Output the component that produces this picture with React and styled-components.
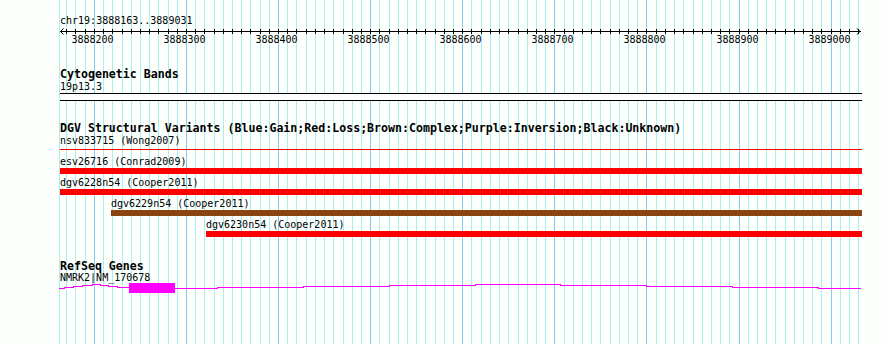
import React from 'react';
import styled, { createGlobalStyle } from 'styled-components';

const START = 3888163;
const END = 3889031;
const X0 = 60.3;
const SCALE = 0.921;
const TRACK_LEFT = 60;
const TRACK_RIGHT = 862;
const col = (bp) => Math.floor(X0 + (bp - START) * SCALE);

const Global = createGlobalStyle`
  html, body { margin: 0; padding: 0; background: #fcfffc; }
  body { width: 890px; height: 344px; overflow: hidden; }
`;

const Canvas = styled.div`
  position: relative;
  width: 890px;
  height: 344px;
  overflow: hidden;
  background: #fcfffc;
  color: #000;
  font-family: "DejaVu Sans Mono", "Liberation Mono", monospace;
`;

const GridLayer = styled.svg`
  position: absolute;
  left: 0;
  top: 0;
  width: 890px;
  height: 344px;
  shape-rendering: crispEdges;
`;

const Tracks = styled.div`
  position: relative;
  display: flex;
  flex-direction: column;
  width: ${TRACK_RIGHT - TRACK_LEFT}px;
  padding: 16px 0 0 ${TRACK_LEFT}px;
`;

const Label = styled.div`
  height: 10px;
  font-size: 10px;
  line-height: 10px;
  white-space: nowrap;
  margin-top: ${(p) => p.$gap || 0}px;
  margin-left: ${(p) => p.$indent || 0}px;
`;

const Title = styled.div`
  height: 11px;
  font-size: 11.6px;
  font-weight: bold;
  line-height: 11px;
  white-space: nowrap;
  margin-top: ${(p) => p.$gap || 0}px;
`;

const Axis = styled.svg`
  display: block;
  width: ${TRACK_RIGHT - TRACK_LEFT}px;
  height: 9px;
  overflow: visible;
  shape-rendering: crispEdges;
`;

const AxisLabels = styled.div`
  position: relative;
  height: 10px;
`;

const AxisNumber = styled.span`
  position: absolute;
  top: 0;
  font-size: 10px;
  line-height: 10px;
  white-space: nowrap;
`;

const Band = styled.div`
  box-sizing: border-box;
  height: 8px;
  margin-top: 1px;
  background: #ffffff;
  border-top: 1px solid #000;
  border-bottom: 1px solid #000;
`;

const VariantRow = styled.div`
  display: flex;
  flex-direction: column;
  height: 21px;
  margin-top: ${(p) => p.$gap || 0}px;
`;

const BarSlot = styled.div`
  display: flex;
  align-items: center;
  height: 6px;
  margin-top: 1px;
`;

const Bar = styled.div`
  height: ${(p) => (p.$thin ? 1 : 6)}px;
  margin-top: ${(p) => (p.$thin ? -1 : 0)}px;
  background: ${(p) => p.$color};
  flex: none;
`;

const GeneGlyph = styled.svg`
  display: block;
  width: ${TRACK_RIGHT - TRACK_LEFT}px;
  height: 11px;
  overflow: visible;
  shape-rendering: crispEdges;
`;

const variants = [
  { name: 'nsv833715 (Wong2007)', start: 3888000, color: '#ff0000', thin: true },
  { name: 'esv26716 (Conrad2009)', start: 3888000, color: '#ff0000' },
  { name: 'dgv6228n54 (Cooper2011)', start: 3888000, color: '#ff0000' },
  { name: 'dgv6229n54 (Cooper2011)', start: 3888219, color: '#8b4513' },
  { name: 'dgv6230n54 (Cooper2011)', start: 3888322, color: '#ff0000' },
];

const gridPositions = [];
for (let bp = 3888170; bp <= 3889030; bp += 10) gridPositions.push(bp);
const majors = [];
for (let bp = 3888200; bp <= 3889000; bp += 100) majors.push(bp);

// gene intron line as steps: [x0, x1, row]
const geneSteps = [
  [59, 64, 288], [64, 73, 287], [73, 82, 286], [82, 92, 285], [92, 100, 284],
  [100, 108, 285], [108, 117, 286], [117, 129, 287],
  [175, 217, 288], [217, 303, 287], [303, 389, 286], [389, 475, 285],
  [475, 560, 284], [560, 646, 285], [646, 732, 286], [732, 818, 287], [818, 861, 288],
];

function Grid() {
  return (
    <GridLayer viewBox="0 0 890 344">
      <line x1={59.5} y1={0} x2={59.5} y2={344} stroke="#aaeeee" strokeWidth={1} />
      {gridPositions.map((bp) => (
        <line
          key={bp}
          x1={col(bp) + 0.5}
          y1={0}
          x2={col(bp) + 0.5}
          y2={344}
          stroke={bp % 100 === 0 ? '#88ccee' : '#aaeeee'}
          strokeWidth={1}
        />
      ))}
    </GridLayer>
  );
}

function Ruler() {
  const rel = (x) => x - TRACK_LEFT;
  return (
    <>
      <Label>chr19:{START}..{END}</Label>
      <Axis viewBox={`0 0 ${TRACK_RIGHT - TRACK_LEFT} 9`}>
        <line x1={0} y1={5.5} x2={800.5} y2={5.5} stroke="#000" strokeWidth={1} />
        <polyline points="3.5,2.5 0.5,5.5 3.5,8.5" fill="none" stroke="#000" strokeWidth={1} shapeRendering="auto" />
        <polyline points="797,2.5 800,5.5 797,8.5" fill="none" stroke="#000" strokeWidth={1} shapeRendering="auto" />
        {gridPositions.map((bp) => (
          <line key={bp} x1={rel(col(bp)) + 0.5} y1={3} x2={rel(col(bp)) + 0.5} y2={8} stroke="#000" strokeWidth={1} />
        ))}
      </Axis>
      <AxisLabels>
        {majors.map((bp) => (
          <AxisNumber key={bp} style={{ left: col(bp) - TRACK_LEFT - 22.5 }}>
            {bp}
          </AxisNumber>
        ))}
      </AxisLabels>
    </>
  );
}

function Variant({ v, gap }) {
  const x = Math.max(TRACK_LEFT, col(v.start));
  const indent = x - TRACK_LEFT;
  return (
    <VariantRow $gap={gap}>
      <Label $indent={indent}>{v.name}</Label>
      <BarSlot>
        <Bar $color={v.color} $thin={v.thin} style={{ marginLeft: indent, width: TRACK_RIGHT - x }} />
      </BarSlot>
    </VariantRow>
  );
}

function Gene() {
  let d = '';
  geneSteps.forEach(([a, b, row], i) => {
    const y = row - 283 + 0.5;
    const x0 = a - TRACK_LEFT;
    const x1 = b - TRACK_LEFT;
    const prev = geneSteps[i - 1];
    if (!prev || prev[1] !== a) d += `M${x0} ${y} `;
    else d += `V${y} `;
    d += `H${x1} `;
  });
  return (
    <GeneGlyph viewBox={`0 0 ${TRACK_RIGHT - TRACK_LEFT} 11`}>
      <path d={d} fill="none" stroke="#ff00ff" strokeWidth={1} />
      <rect x={129 - TRACK_LEFT} y={0} width={46} height={10} fill="#ff00ff" />
    </GeneGlyph>
  );
}

export default function App() {
  return (
    <Canvas>
      <Global />
      <Grid />
      <Tracks>
        <Ruler />
        <Title $gap={24}>Cytogenetic Bands</Title>
        <Label $gap={2}>19p13.3</Label>
        <Band />
        <Title $gap={22}>DGV Structural Variants (Blue:Gain;Red:Loss;Brown:Complex;Purple:Inversion;Black:Unknown)</Title>
        {variants.map((v, i) => (
          <Variant key={v.name} v={v} gap={i === 0 ? 2 : 0} />
        ))}
        <Title $gap={20}>RefSeq Genes</Title>
        <Label $gap={1}>NMRK2|NM_170678</Label>
        <Gene />
      </Tracks>
    </Canvas>
  );
}
